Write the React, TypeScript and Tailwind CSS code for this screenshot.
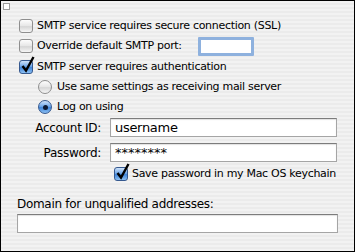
import type { ReactNode } from "react";

const font = { fontFamily: '"DejaVu Sans", "Liberation Sans", sans-serif' } as const;

function Check({ checked }: { checked?: boolean }) {
  return (
    <span className="relative inline-block w-[14px] h-[14px] shrink-0">
      <span
        className={
          checked
            ? "absolute inset-0 rounded-[3px] border border-[#36598f] bg-[linear-gradient(#cfe3fa,#6ea6e8_45%,#3f84d8_55%,#8cc0f3)]"
            : "absolute inset-0 rounded-[3px] border border-[#8e8e8e] bg-[linear-gradient(#fdfdfd,#e6e6e6_50%,#d6d6d6_55%,#f6f6f6)]"
        }
      />
      {checked && (
        <svg className="absolute left-[1px] -top-[4px] overflow-visible" width="15" height="17" viewBox="0 0 15 17">
          <path d="M2.5 10 L6 14.5 L13.5 1" fill="none" stroke="#000" strokeWidth="2.4" strokeLinejoin="miter" />
        </svg>
      )}
    </span>
  );
}

function Radio({ on }: { on?: boolean }) {
  return (
    <span
      className={
        on
          ? "relative inline-flex items-center justify-center w-[14px] h-[14px] shrink-0 rounded-full border border-[#36598f] bg-[linear-gradient(#cfe3fa,#6ea6e8_45%,#3f84d8_55%,#8cc0f3)]"
          : "relative inline-flex items-center justify-center w-[14px] h-[14px] shrink-0 rounded-full border border-[#8e8e8e] bg-[linear-gradient(#fdfdfd,#e6e6e6_50%,#d6d6d6_55%,#f6f6f6)]"
      }
    >
      {on && <span className="w-[5px] h-[5px] rounded-full bg-[#0d1a33]" />}
    </span>
  );
}

function Row({ children, className = "" }: { children: ReactNode; className?: string }) {
  return <div className={`flex items-center h-5 ${className}`}>{children}</div>;
}

function Field({ value, className = "" }: { value?: string; className?: string }) {
  return (
    <div
      className={`h-[19px] bg-white border border-[#a5a5a5] border-t-[#7c7c7c] shadow-[inset_0_1px_1px_rgba(0,0,0,0.12)] flex items-center px-[4px] text-[13px] text-black ${className}`}
    >
      {value}
    </div>
  );
}

export default function App() {
  return (
    <div
      className="relative w-[355px] h-[252px] border border-black text-black text-[11px] tracking-[-0.3px] bg-[repeating-linear-gradient(180deg,#f2f2f2_0px,#f2f2f2_2px,#ebebeb_2px,#ebebeb_4px)] overflow-hidden"
      style={font}
    >
      <span className="absolute left-[2px] top-[2px] w-[7px] h-[7px] border border-[#9a9a9a] bg-white" />

      <div className="flex flex-col pt-[15px] pl-[18px]">
        <Row>
          <Check />
          <span className="ml-[4px]">SMTP service requires secure connection (SSL)</span>
        </Row>
        <Row>
          <Check />
          <span className="ml-[4px]">Override default SMTP port:</span>
          <div className="ml-auto mr-[100px] w-[56px] h-[19px] rounded-[1px] border-[3px] border-[#8eb1de] bg-white" />
        </Row>
        <Row className="mt-[1px]">
          <Check checked />
          <span className="ml-[4px]">SMTP server requires authentication</span>
        </Row>
        <Row className="pl-[19px]">
          <Radio />
          <span className="ml-[5px]">Use same settings as receiving mail server</span>
        </Row>
        <Row className="pl-[19px]">
          <Radio on />
          <span className="ml-[5px]">Log on using</span>
        </Row>

        <div className="grid grid-cols-[82px_227px] gap-x-[9px] gap-y-[6px] mt-[1px]">
          <span className="self-center text-right text-[12px]">Account ID:</span>
          <Field value="username" />
          <span className="self-center text-right text-[12px]">Password:</span>
          <Field value="********" className="text-[11px] tracking-normal" />
        </div>

        <Row className="pl-[95px] mt-[2px]">
          <Check checked />
          <span className="ml-[4px]">Save password in my Mac OS keychain</span>
        </Row>

        <div className="mt-[11px] -ml-[2px] text-[12px]">Domain for unqualified addresses:</div>
        <Field className="mt-[1px] -ml-[2px] w-[321px] h-[18px]" />
      </div>
    </div>
  );
}
